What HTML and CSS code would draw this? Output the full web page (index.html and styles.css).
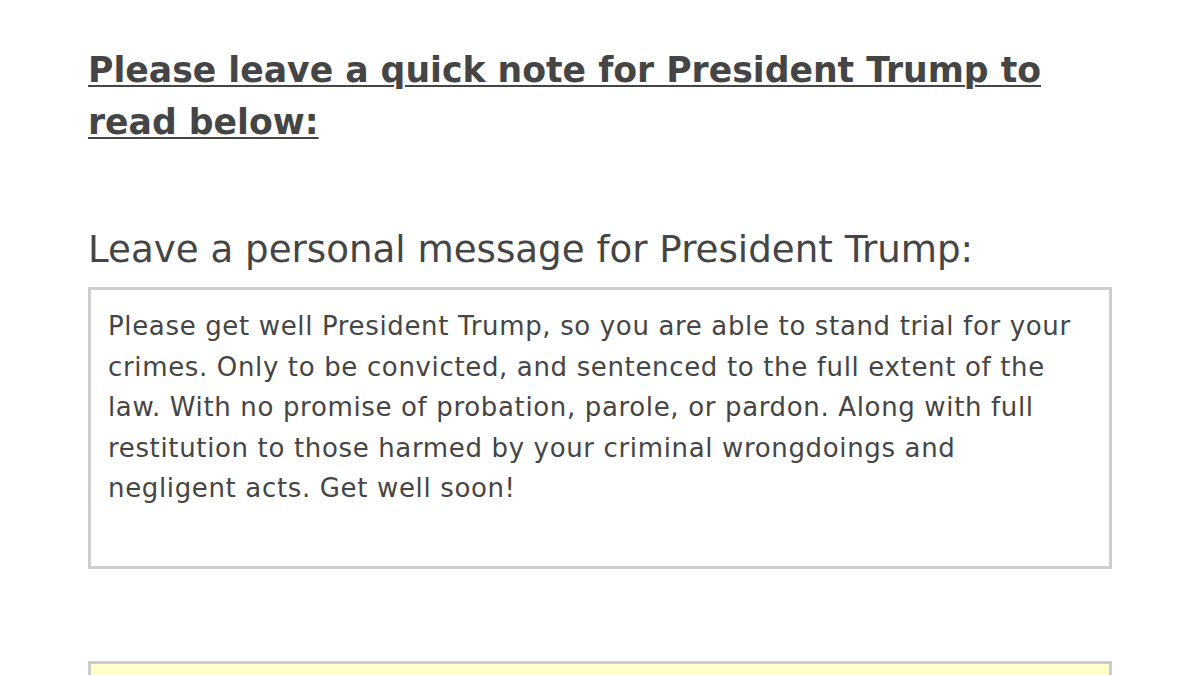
FILE: index.html
```html
<!DOCTYPE html>
<html lang="en">
<head>
<meta charset="utf-8">
<title>Message</title>
<link rel="stylesheet" href="styles.css">
</head>
<body>
<main class="page">
  <h2 class="heading"><span class="line">Please leave a quick note for President Trump to</span><span class="line">read below:</span></h2>
  <label class="label" for="msg">Leave a personal message for President Trump:</label>
  <div class="textbox" id="msg">
    <span class="tline">Please get well President Trump, so you are able to stand trial for your</span>
    <span class="tline">crimes. Only to be convicted, and sentenced to the full extent of the</span>
    <span class="tline">law. With no promise of probation, parole, or pardon. Along with full</span>
    <span class="tline">restitution to those harmed by your criminal wrongdoings and</span>
    <span class="tline">negligent acts. Get well soon!</span>
  </div>
  <div class="yellow"></div>
</main>
</body>
</html>
```

FILE: styles.css
```css
html, body {
  margin: 0;
  padding: 0;
  background: #ffffff;
}
.page {
  width: 1024px;
  padding: 0 0 0 88px;
  font-family: "DejaVu Sans", sans-serif;
  color: #454545;
}
.heading {
  margin: 0;
  padding-top: 44px;
  font-size: 34.65px;
  line-height: 52px;
  font-weight: bold;
  text-decoration: underline;
  text-decoration-thickness: 2px;
  text-underline-offset: 3px;
}
.line {
  display: block;
  white-space: nowrap;
}
.label {
  display: block;
  margin-top: 81px;
  font-size: 37.2px;
  line-height: 40px;
  font-weight: normal;
  white-space: nowrap;
}
.textbox {
  margin-top: 18px;
  height: 282px;
  border: 3px solid #cccccc;
  padding: 16px 18px 0 17px;
  box-sizing: border-box;
  font-size: 26px;
  letter-spacing: 0.65px;
  line-height: 40.5px;
}
.tline {
  display: block;
  white-space: nowrap;
}
.yellow {
  margin-top: 92px;
  height: 40px;
  border: 3px solid #cccccc;
  background: #ffffcc;
}
```
